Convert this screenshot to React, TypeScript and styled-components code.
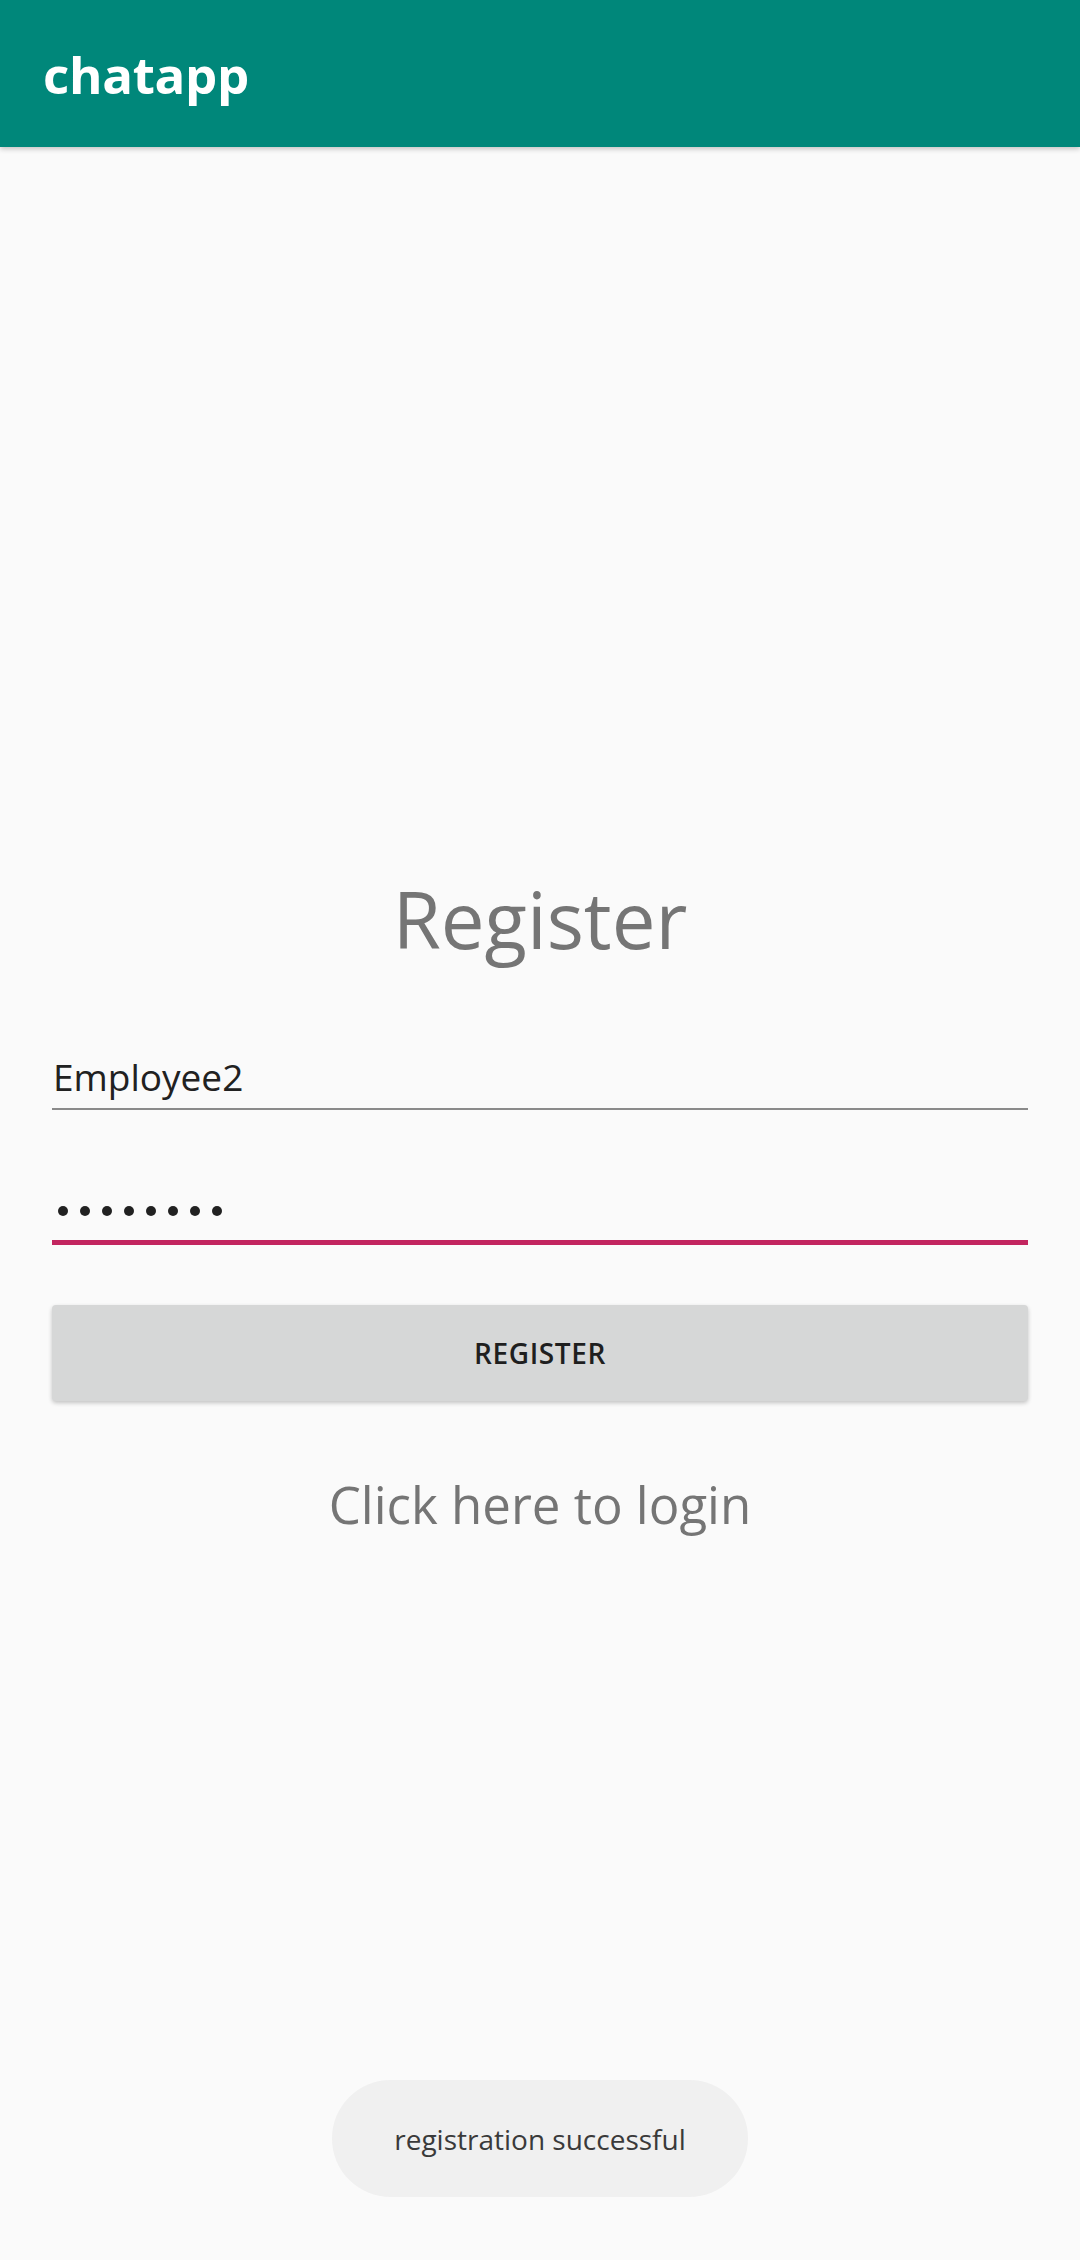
import React from "react";
import styled, { createGlobalStyle } from "styled-components";

const Global = createGlobalStyle`
  html, body {
    margin: 0;
    padding: 0;
    background: #fafafa;
    font-family: "Open Sans", "Noto Sans", sans-serif;
  }
  #root {
    min-height: 100vh;
  }
`;

const Screen = styled.div`
  min-height: 100vh;
  display: flex;
  flex-direction: column;
  background: #fafafa;
`;

const AppBar = styled.header`
  height: 147px;
  background: #00877a;
  display: flex;
  align-items: center;
  padding-left: 43px;
  box-shadow: 0 2px 5px rgba(0, 0, 0, 0.22);
  position: relative;
  z-index: 1;
`;

const AppTitle = styled.h1`
  margin: 2px 0 0;
  font-size: 51px;
  line-height: 55px;
  font-weight: 700;
  color: #ffffff;
  letter-spacing: -0.3px;
`;

const Content = styled.main`
  display: flex;
  flex-direction: column;
  padding: 0 52px;
`;

const Heading = styled.h2`
  margin: 733px 0 0;
  font-size: 78px;
  line-height: 78px;
  font-weight: 400;
  color: #757575;
  text-align: center;
`;

const Field = styled.div<{ $focused?: boolean; $gap: number }>`
  margin-top: ${(p) => p.$gap}px;
  padding: 16px 0 ${(p) => (p.$focused ? 9 : 12)}px 1px;
  border-bottom: ${(p) => (p.$focused ? "5px solid #c2255f" : "2px solid #8a8a8a")};
  height: 40px;
  display: flex;
  align-items: center;
`;

const FieldText = styled.span`
  font-size: 37px;
  line-height: 40px;
  color: #212121;
  padding-top: 2px;
`;

const Dots = styled.div`
  display: flex;
  gap: 12px;
  padding-left: 5px;
`;

const Dot = styled.span`
  width: 10px;
  height: 10px;
  border-radius: 50%;
  background: #212121;
`;

const Button = styled.button`
  margin-top: 60px;
  height: 96px;
  border: none;
  border-radius: 4px;
  background: #d6d7d7;
  box-shadow: 0 2px 4px rgba(0, 0, 0, 0.22);
  font-family: inherit;
  font-size: 28px;
  font-weight: 600;
  color: #1f1f1f;
  letter-spacing: 0.6px;
  cursor: pointer;
`;

const LoginLink = styled.a`
  margin-top: 76px;
  font-size: 51px;
  line-height: 54px;
  color: #757575;
  text-align: center;
  text-decoration: none;
`;

const Toast = styled.div`
  position: fixed;
  left: 50%;
  bottom: 63px;
  transform: translateX(-50%);
  width: 416px;
  height: 117px;
  border-radius: 59px;
  background: #f0f0f0;
  display: flex;
  align-items: center;
  justify-content: center;
  font-size: 28px;
  color: #3a3a3a;
`;

export default function App() {
  return (
    <Screen>
      <Global />
      <AppBar>
        <AppTitle>chatapp</AppTitle>
      </AppBar>
      <Content>
        <Heading>Register</Heading>
        <Field $gap={82}>
          <FieldText>Employee2</FieldText>
        </Field>
        <Field $gap={65} $focused>
          <Dots>
            {Array.from({ length: 8 }).map((_, i) => (
              <Dot key={i} />
            ))}
          </Dots>
        </Field>
        <Button>REGISTER</Button>
        <LoginLink href="#">Click here to login</LoginLink>
      </Content>
      <Toast>registration successful</Toast>
    </Screen>
  );
}
